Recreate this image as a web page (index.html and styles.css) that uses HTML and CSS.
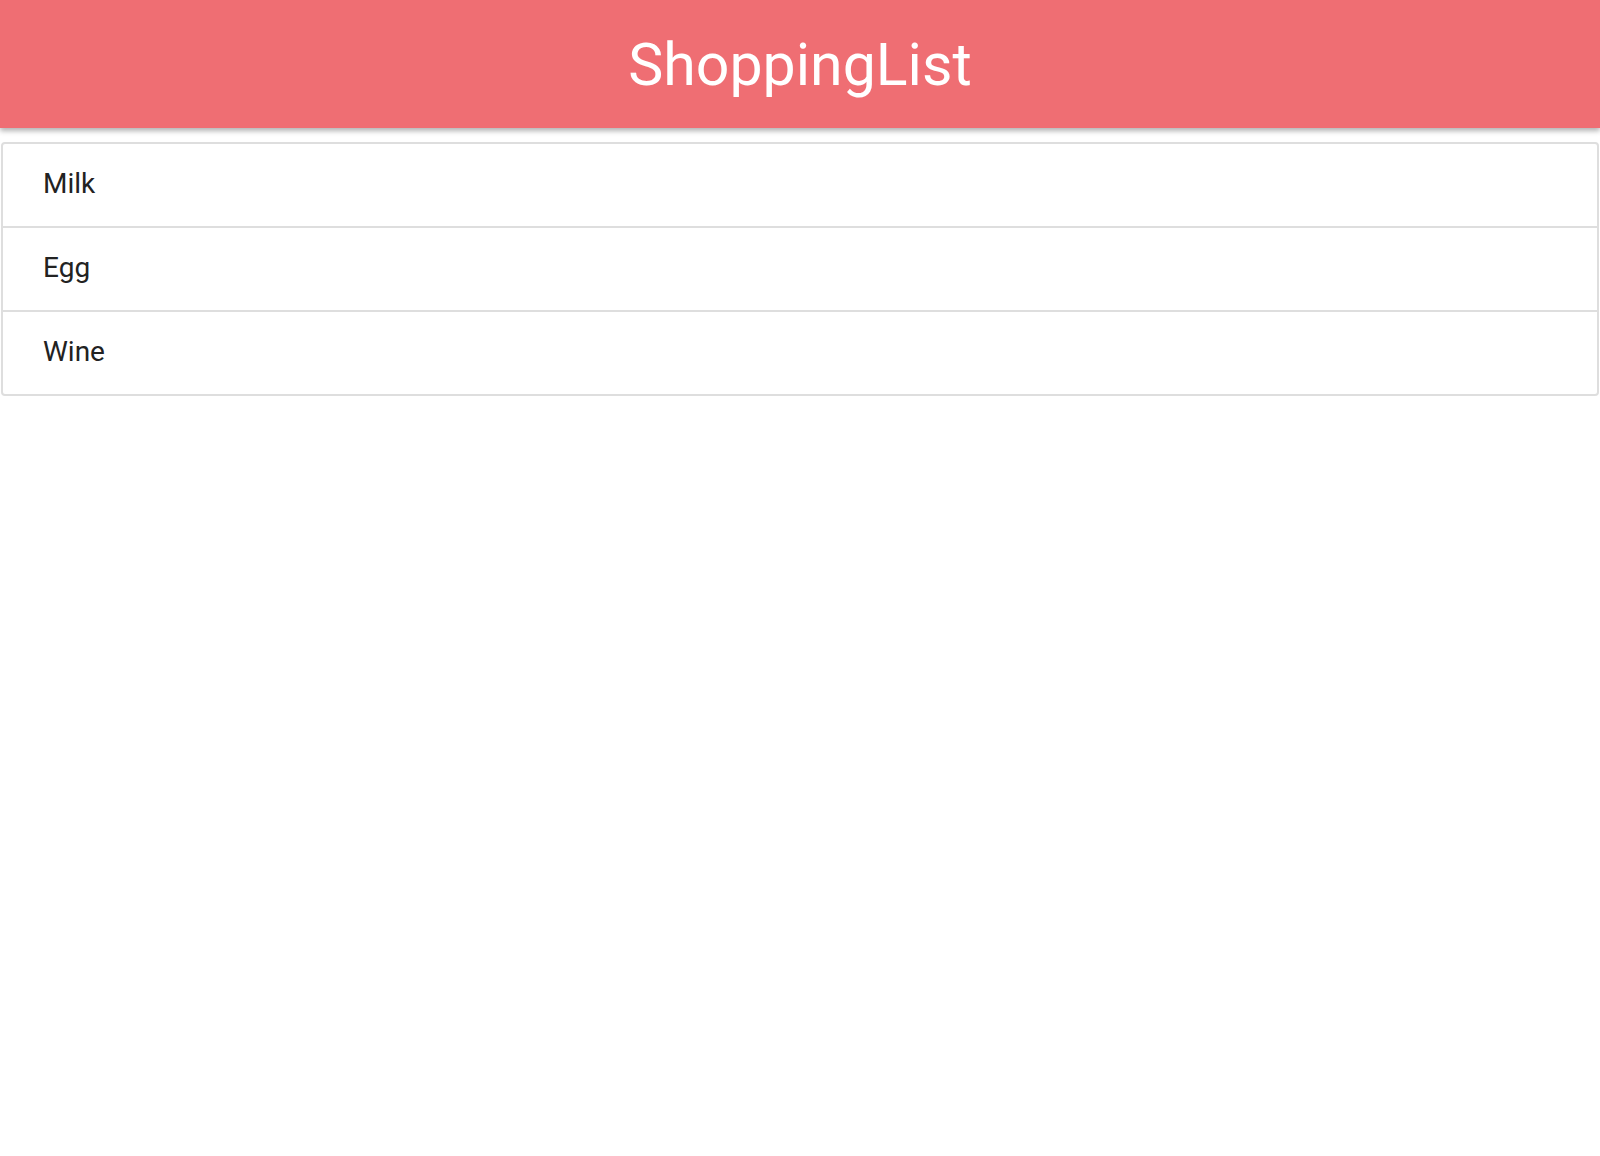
FILE: index.html
```html
<!DOCTYPE html>
<html>
<head>
<meta charset="utf-8">
<link rel="stylesheet" href="styles.css">
</head>
<body>
<header class="app-bar"><h1 class="title">ShoppingList</h1></header>
<ul class="list">
  <li class="item">Milk</li>
  <li class="item">Egg</li>
  <li class="item">Wine</li>
</ul>
</body>
</html>
```

FILE: styles.css
```css
html, body {
  margin: 0;
  padding: 0;
  background: #fff;
  font-family: Roboto, "Noto Sans", sans-serif;
}
.app-bar {
  height: 128px;
  background: #ef6e73;
  display: flex;
  align-items: center;
  justify-content: center;
  box-shadow: 0 3px 5px rgba(0,0,0,0.3);
  position: relative;
  z-index: 1;
}
.title {
  margin: 0;
  color: #fff;
  font-weight: 400;
  font-size: 59px;
  line-height: 1;
}
.list {
  list-style: none;
  margin: 14px 1px 0 1px;
  padding: 0;
  border: 2px solid #dedede;
  border-radius: 4px;
}
.item {
  height: 84px;
  box-sizing: border-box;
  padding: 0 0 3px 40px;
  display: flex;
  align-items: center;
  font-size: 28px;
  color: #222;
  border-top: 2px solid #dedede;
}
.item:first-child {
  border-top: none;
  height: 82px;
}
```
